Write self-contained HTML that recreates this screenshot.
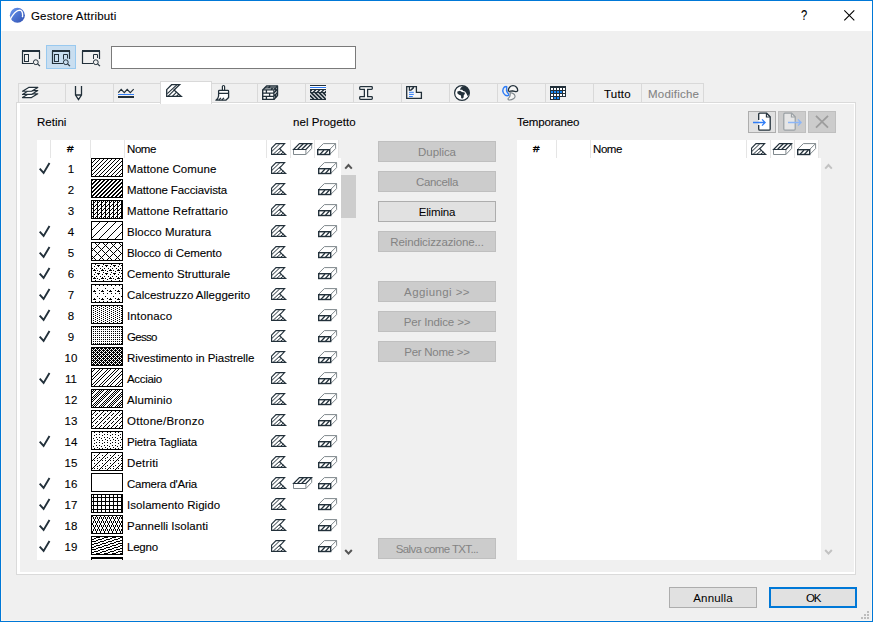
<!DOCTYPE html><html><head><meta charset="utf-8"><title>Gestore Attributi</title><style>
html,body{margin:0;padding:0;}
body{width:873px;height:622px;overflow:hidden;background:#f0f0f0;font-family:"Liberation Sans",sans-serif;font-size:11.5px;color:#000;position:relative;}
.a{position:absolute;}
.win{left:0;top:0;width:871px;height:620px;border:1px solid #0078d7;background:#f0f0f0;}
.title{left:1px;top:1px;width:871px;height:30px;background:#fff;}
.t{position:absolute;white-space:nowrap;line-height:14px;height:14px;-webkit-text-stroke:0.1px currentColor;}
.btn{position:absolute;box-sizing:border-box;border:1px solid #adadad;background:#e1e1e1;text-align:center;line-height:21px;height:21px;white-space:nowrap;}
.btn.dis{background:#cccccc;border-color:#bfbfbf;color:#838383;}
.list{position:absolute;background:#fff;overflow:hidden;}
.sw{position:absolute;left:54px;width:32px;height:19px;box-sizing:border-box;border:1px solid #000;background:#fff;overflow:hidden;}
.sw svg{position:absolute;left:0;top:0;}
.row{position:absolute;left:0;width:304px;height:21px;}
.sep{position:absolute;width:1px;background:#e5e5e5;}
svg{display:block;overflow:visible;}
</style></head><body>
<div class="a win"></div><div class="a title"></div>
<svg class="a" style="left:0;top:0" width="0" height="0"><defs><pattern id="p1" width="4" height="4" patternUnits="userSpaceOnUse"><rect width="4" height="4" fill="#fff"/><rect x="3" y="0" width="1" height="1" fill="#000"/><rect x="2" y="1" width="1" height="1" fill="#000"/><rect x="1" y="2" width="1" height="1" fill="#000"/><rect x="0" y="3" width="1" height="1" fill="#000"/></pattern><pattern id="p2" width="4" height="4" patternUnits="userSpaceOnUse"><rect width="4" height="4" fill="#fff"/><rect x="0" y="0" width="1" height="1" fill="#000"/><rect x="3" y="0" width="1" height="1" fill="#000"/><rect x="2" y="1" width="2" height="1" fill="#000"/><rect x="1" y="2" width="2" height="1" fill="#000"/><rect x="0" y="3" width="2" height="1" fill="#000"/></pattern><pattern id="p3" width="4" height="4" patternUnits="userSpaceOnUse"><rect width="4" height="4" fill="#fff"/><rect x="1" y="0" width="1" height="1" fill="#000"/><rect x="3" y="0" width="1" height="1" fill="#000"/><rect x="1" y="1" width="2" height="1" fill="#000"/><rect x="1" y="2" width="1" height="1" fill="#000"/><rect x="0" y="3" width="2" height="1" fill="#000"/></pattern><pattern id="p4" width="8" height="8" patternUnits="userSpaceOnUse"><rect width="8" height="8" fill="#fff"/><rect x="7" y="0" width="1" height="1" fill="#000"/><rect x="6" y="1" width="1" height="1" fill="#000"/><rect x="5" y="2" width="1" height="1" fill="#000"/><rect x="4" y="3" width="1" height="1" fill="#000"/><rect x="3" y="4" width="1" height="1" fill="#000"/><rect x="2" y="5" width="1" height="1" fill="#000"/><rect x="1" y="6" width="1" height="1" fill="#000"/><rect x="0" y="7" width="1" height="1" fill="#000"/></pattern><pattern id="p5" width="8" height="8" patternUnits="userSpaceOnUse"><rect width="8" height="8" fill="#fff"/><rect x="3" y="0" width="1" height="1" fill="#000"/><rect x="7" y="0" width="1" height="1" fill="#000"/><rect x="4" y="1" width="1" height="1" fill="#000"/><rect x="6" y="1" width="1" height="1" fill="#000"/><rect x="5" y="2" width="1" height="1" fill="#000"/><rect x="4" y="3" width="1" height="1" fill="#000"/><rect x="6" y="3" width="1" height="1" fill="#000"/><rect x="3" y="4" width="1" height="1" fill="#000"/><rect x="7" y="4" width="1" height="1" fill="#000"/><rect x="0" y="5" width="1" height="1" fill="#000"/><rect x="2" y="5" width="1" height="1" fill="#000"/><rect x="1" y="6" width="1" height="1" fill="#000"/><rect x="0" y="7" width="1" height="1" fill="#000"/><rect x="2" y="7" width="1" height="1" fill="#000"/></pattern><pattern id="p6" width="8" height="8" patternUnits="userSpaceOnUse"><rect width="8" height="8" fill="#fff"/><rect x="3" y="0" width="1" height="1" fill="#000"/><rect x="5" y="1" width="3" height="1" fill="#000"/><rect x="2" y="2" width="1" height="1" fill="#000"/><rect x="6" y="2" width="1" height="1" fill="#000"/><rect x="0" y="4" width="1" height="1" fill="#000"/><rect x="4" y="4" width="1" height="1" fill="#000"/><rect x="2" y="5" width="1" height="1" fill="#000"/><rect x="1" y="6" width="3" height="1" fill="#000"/><rect x="5" y="6" width="1" height="1" fill="#000"/><rect x="7" y="7" width="1" height="1" fill="#000"/></pattern><pattern id="p7" width="8" height="8" patternUnits="userSpaceOnUse"><rect width="8" height="8" fill="#fff"/><rect x="3" y="0" width="1" height="1" fill="#000"/><rect x="7" y="0" width="1" height="1" fill="#000"/><rect x="5" y="3" width="1" height="1" fill="#000"/><rect x="2" y="5" width="1" height="1" fill="#000"/><rect x="7" y="5" width="1" height="1" fill="#000"/><rect x="1" y="6" width="3" height="1" fill="#000"/></pattern><pattern id="p8" width="4" height="2" patternUnits="userSpaceOnUse"><rect width="4" height="2" fill="#fff"/><rect x="1" y="0" width="1" height="1" fill="#000"/><rect x="3" y="1" width="1" height="1" fill="#000"/></pattern><pattern id="p9" width="2" height="2" patternUnits="userSpaceOnUse"><rect width="2" height="2" fill="#fff"/><rect x="1" y="0" width="1" height="1" fill="#000"/></pattern><pattern id="p10" width="4" height="4" patternUnits="userSpaceOnUse"><rect width="4" height="4" fill="#fff"/><rect x="0" y="0" width="3" height="1" fill="#000"/><rect x="1" y="1" width="1" height="1" fill="#000"/><rect x="3" y="1" width="1" height="1" fill="#000"/><rect x="0" y="2" width="1" height="1" fill="#000"/><rect x="2" y="2" width="2" height="1" fill="#000"/><rect x="1" y="3" width="1" height="1" fill="#000"/><rect x="3" y="3" width="1" height="1" fill="#000"/></pattern><pattern id="p11" width="8" height="8" patternUnits="userSpaceOnUse"><rect width="8" height="8" fill="#fff"/><rect x="2" y="0" width="1" height="1" fill="#000"/><rect x="7" y="0" width="1" height="1" fill="#000"/><rect x="1" y="1" width="1" height="1" fill="#000"/><rect x="6" y="1" width="1" height="1" fill="#000"/><rect x="0" y="2" width="1" height="1" fill="#000"/><rect x="5" y="2" width="1" height="1" fill="#000"/><rect x="4" y="3" width="1" height="1" fill="#000"/><rect x="7" y="3" width="1" height="1" fill="#000"/><rect x="3" y="4" width="1" height="1" fill="#000"/><rect x="6" y="4" width="1" height="1" fill="#000"/><rect x="2" y="5" width="1" height="1" fill="#000"/><rect x="5" y="5" width="1" height="1" fill="#000"/><rect x="1" y="6" width="1" height="1" fill="#000"/><rect x="4" y="6" width="1" height="1" fill="#000"/><rect x="0" y="7" width="1" height="1" fill="#000"/><rect x="3" y="7" width="1" height="1" fill="#000"/></pattern><pattern id="p12" width="8" height="8" patternUnits="userSpaceOnUse"><rect width="8" height="8" fill="#fff"/><rect x="1" y="0" width="1" height="1" fill="#000"/><rect x="3" y="0" width="1" height="1" fill="#000"/><rect x="7" y="0" width="1" height="1" fill="#000"/><rect x="0" y="1" width="1" height="1" fill="#000"/><rect x="2" y="1" width="1" height="1" fill="#000"/><rect x="6" y="1" width="1" height="1" fill="#000"/><rect x="1" y="2" width="1" height="1" fill="#000"/><rect x="5" y="2" width="1" height="1" fill="#000"/><rect x="7" y="2" width="1" height="1" fill="#000"/><rect x="0" y="3" width="1" height="1" fill="#000"/><rect x="4" y="3" width="1" height="1" fill="#000"/><rect x="6" y="3" width="1" height="1" fill="#000"/><rect x="3" y="4" width="1" height="1" fill="#000"/><rect x="5" y="4" width="1" height="1" fill="#000"/><rect x="7" y="4" width="1" height="1" fill="#000"/><rect x="2" y="5" width="1" height="1" fill="#000"/><rect x="4" y="5" width="1" height="1" fill="#000"/><rect x="6" y="5" width="1" height="1" fill="#000"/><rect x="1" y="6" width="1" height="1" fill="#000"/><rect x="3" y="6" width="1" height="1" fill="#000"/><rect x="5" y="6" width="1" height="1" fill="#000"/><rect x="0" y="7" width="1" height="1" fill="#000"/><rect x="2" y="7" width="1" height="1" fill="#000"/><rect x="4" y="7" width="1" height="1" fill="#000"/></pattern><pattern id="p13" width="8" height="8" patternUnits="userSpaceOnUse"><rect width="8" height="8" fill="#fff"/><rect x="3" y="0" width="1" height="1" fill="#000"/><rect x="7" y="0" width="1" height="1" fill="#000"/><rect x="2" y="1" width="1" height="1" fill="#000"/><rect x="1" y="2" width="1" height="1" fill="#000"/><rect x="5" y="2" width="1" height="1" fill="#000"/><rect x="0" y="3" width="1" height="1" fill="#000"/><rect x="4" y="3" width="1" height="1" fill="#000"/><rect x="3" y="4" width="1" height="1" fill="#000"/><rect x="7" y="4" width="1" height="1" fill="#000"/><rect x="6" y="5" width="1" height="1" fill="#000"/><rect x="1" y="6" width="1" height="1" fill="#000"/><rect x="5" y="6" width="1" height="1" fill="#000"/><rect x="0" y="7" width="1" height="1" fill="#000"/><rect x="4" y="7" width="1" height="1" fill="#000"/></pattern><pattern id="p14" width="8" height="8" patternUnits="userSpaceOnUse"><rect width="8" height="8" fill="#fff"/><rect x="2" y="0" width="1" height="1" fill="#000"/><rect x="7" y="0" width="1" height="1" fill="#000"/><rect x="4" y="2" width="1" height="1" fill="#000"/><rect x="7" y="2" width="1" height="1" fill="#000"/><rect x="2" y="3" width="1" height="1" fill="#000"/><rect x="4" y="5" width="1" height="1" fill="#000"/><rect x="7" y="5" width="1" height="1" fill="#000"/><rect x="1" y="6" width="1" height="1" fill="#000"/><rect x="5" y="7" width="1" height="1" fill="#000"/></pattern><pattern id="p15" width="8" height="8" patternUnits="userSpaceOnUse"><rect width="8" height="8" fill="#fff"/><rect x="7" y="0" width="1" height="1" fill="#000"/><rect x="6" y="1" width="1" height="1" fill="#000"/><rect x="2" y="2" width="1" height="1" fill="#000"/><rect x="5" y="2" width="1" height="1" fill="#000"/><rect x="4" y="3" width="1" height="1" fill="#000"/><rect x="3" y="4" width="1" height="1" fill="#000"/><rect x="7" y="4" width="1" height="1" fill="#000"/><rect x="2" y="5" width="1" height="1" fill="#000"/><rect x="5" y="5" width="1" height="1" fill="#000"/><rect x="1" y="6" width="1" height="1" fill="#000"/><rect x="0" y="7" width="1" height="1" fill="#000"/><rect x="2" y="7" width="1" height="1" fill="#000"/><rect x="5" y="7" width="1" height="1" fill="#000"/></pattern><pattern id="p17" width="4" height="4" patternUnits="userSpaceOnUse"><rect width="4" height="4" fill="#fff"/><rect x="1" y="0" width="1" height="1" fill="#000"/><rect x="1" y="1" width="1" height="1" fill="#000"/><rect x="0" y="2" width="4" height="1" fill="#000"/><rect x="1" y="3" width="1" height="1" fill="#000"/></pattern><pattern id="p18" width="4" height="8" patternUnits="userSpaceOnUse"><rect width="4" height="8" fill="#fff"/><rect x="0" y="0" width="1" height="1" fill="#000"/><rect x="1" y="1" width="1" height="1" fill="#000"/><rect x="3" y="1" width="1" height="1" fill="#000"/><rect x="1" y="2" width="1" height="1" fill="#000"/><rect x="3" y="2" width="1" height="1" fill="#000"/><rect x="2" y="3" width="1" height="1" fill="#000"/><rect x="2" y="4" width="1" height="1" fill="#000"/><rect x="1" y="5" width="1" height="1" fill="#000"/><rect x="3" y="5" width="1" height="1" fill="#000"/><rect x="1" y="6" width="1" height="1" fill="#000"/><rect x="3" y="6" width="1" height="1" fill="#000"/><rect x="0" y="7" width="1" height="1" fill="#000"/></pattern><pattern id="p19" width="8" height="8" patternUnits="userSpaceOnUse"><rect width="8" height="8" fill="#fff"/><rect x="4" y="0" width="4" height="1" fill="#000"/><rect x="2" y="1" width="2" height="1" fill="#000"/><rect x="0" y="2" width="2" height="1" fill="#000"/><rect x="6" y="2" width="2" height="1" fill="#000"/><rect x="4" y="3" width="2" height="1" fill="#000"/><rect x="0" y="4" width="4" height="1" fill="#000"/><rect x="6" y="5" width="2" height="1" fill="#000"/><rect x="2" y="6" width="4" height="1" fill="#000"/><rect x="0" y="7" width="2" height="1" fill="#000"/></pattern></defs></svg>
<div class="a" style="left:1px;top:31px;width:869px;height:589px;border:solid #fcf6f0;border-width:0 1px 1px 1px;"></div>
<svg class="a" style="left:9px;top:7px" width="17" height="17" viewBox="0 0 17 17"><defs><linearGradient id="lg" x1="0" y1="0" x2="1" y2="1"><stop offset="0" stop-color="#6a98f0"/><stop offset="1" stop-color="#2f4fb0"/></linearGradient></defs><circle cx="8.4" cy="8.2" r="7.5" fill="url(#lg)"/><path d="M0.8 13C3.4 8 7.4 3.3 10.6 3.1C12.8 3.1 13.7 5.6 13.6 8.4" fill="none" stroke="#fff" stroke-width="1.4" stroke-linecap="round"/><circle cx="13.5" cy="9.6" r="0.8" fill="#fff"/></svg>
<div class="t" style="left:31px;top:9px;letter-spacing:0.172px;">Gestore Attributi</div>
<div class="t" style="left:801px;top:7px;font-size:14px;line-height:16px;height:16px;transform:scaleX(0.8);transform-origin:0 0;">?</div>
<svg class="a" style="left:844px;top:10px" width="11" height="11" viewBox="0 0 11 11"><path d="M0.3 0.3L10.3 10.3M10.3 0.3L0.3 10.3" stroke="#000" stroke-width="1.1" fill="none"/></svg>
<div class="a" style="left:46px;top:45px;width:28px;height:22px;border:1px solid #99c9ef;background:#c9def0;"></div>
<svg class="a" style="left:22px;top:50px" width="19" height="17" viewBox="0 0 19 17"><path d="M0 1H18" stroke="#22303a" stroke-width="2"/><path d="M0.5 1V13.5H11M17.5 1V9" fill="none" stroke="#22303a" stroke-width="1.2"/><rect x="2.5" y="4.5" width="4" height="7" fill="none" stroke="#22303a" stroke-width="1"/><circle cx="13.8" cy="12.2" r="2.4" fill="none" stroke="#22303a" stroke-width="1"/><path d="M15.6 14L18 16.2" stroke="#22303a" stroke-width="1.1"/></svg>
<svg class="a" style="left:52px;top:50px" width="19" height="17" viewBox="0 0 19 17"><path d="M0 1H18" stroke="#22303a" stroke-width="2"/><path d="M0.5 1V13.5H11M17.5 1V9" fill="none" stroke="#22303a" stroke-width="1.2"/><rect x="2.5" y="4.5" width="4" height="7" fill="none" stroke="#22303a" stroke-width="1"/><path d="M11.5 9.5V4.5H15.5V8.5" fill="none" stroke="#22303a" stroke-width="1"/><circle cx="13.8" cy="12.2" r="2.4" fill="none" stroke="#22303a" stroke-width="1"/><path d="M15.6 14L18 16.2" stroke="#22303a" stroke-width="1.1"/></svg>
<svg class="a" style="left:82px;top:50px" width="19" height="17" viewBox="0 0 19 17"><path d="M0 1H18" stroke="#22303a" stroke-width="2"/><path d="M0.5 1V13.5H11M17.5 1V9" fill="none" stroke="#22303a" stroke-width="1.2"/><path d="M11.5 9V4.5H15.5V8" fill="none" stroke="#22303a" stroke-width="1"/><circle cx="13.8" cy="12.2" r="2.4" fill="none" stroke="#22303a" stroke-width="1"/><path d="M15.6 14L18 16.2" stroke="#22303a" stroke-width="1.1"/></svg>
<div class="a" style="left:111px;top:46px;width:243px;height:21px;border:1px solid #7a7a7a;background:#fff;"></div>
<div class="a" style="left:16px;top:102px;width:838px;height:471px;border:1px solid #dadada;"></div>
<div class="a" style="left:17px;top:103px;width:834px;height:468px;border:solid #fff;border-width:1px 1px 2px 3px;"></div>
<div class="a" style="left:18px;top:83px;width:684px;height:19px;border:1px solid #d9d9d9;border-bottom:none;"></div>
<div class="a" style="left:65px;top:84px;width:1px;height:18px;background:#d9d9d9;"></div>
<div class="a" style="left:113px;top:84px;width:1px;height:18px;background:#d9d9d9;"></div>
<div class="a" style="left:257px;top:84px;width:1px;height:18px;background:#d9d9d9;"></div>
<div class="a" style="left:305px;top:84px;width:1px;height:18px;background:#d9d9d9;"></div>
<div class="a" style="left:353px;top:84px;width:1px;height:18px;background:#d9d9d9;"></div>
<div class="a" style="left:401px;top:84px;width:1px;height:18px;background:#d9d9d9;"></div>
<div class="a" style="left:449px;top:84px;width:1px;height:18px;background:#d9d9d9;"></div>
<div class="a" style="left:497px;top:84px;width:1px;height:18px;background:#d9d9d9;"></div>
<div class="a" style="left:545px;top:84px;width:1px;height:18px;background:#d9d9d9;"></div>
<div class="a" style="left:593px;top:84px;width:1px;height:18px;background:#d9d9d9;"></div>
<div class="a" style="left:641px;top:84px;width:1px;height:18px;background:#d9d9d9;"></div>
<div class="a" style="left:160px;top:81px;width:50px;height:22px;border:1px solid #d9d9d9;border-bottom:none;background:#fff;"></div>
<div class="t" style="left:604px;top:87px;letter-spacing:0.226px;">Tutto</div>
<div class="t" style="left:648px;top:87px;color:#838383;letter-spacing:0.210px;">Modifiche</div>
<svg class="a" style="left:22px;top:86px" width="17" height="13" viewBox="0 0 17 13"><path d="M6.7 7.800000000000001H15.8L9.5 11.600000000000001H0.5Z" fill="#fff" stroke="#22303a" stroke-width="1.15" stroke-linejoin="round"/><path d="M6.7 4.6H15.8L9.5 8.4H0.5Z" fill="#fff" stroke="#22303a" stroke-width="1.15" stroke-linejoin="round"/><path d="M6.7 1.4H15.8L9.5 5.2H0.5Z" fill="#fff" stroke="#22303a" stroke-width="1.15" stroke-linejoin="round"/></svg>
<svg class="a" style="left:74px;top:85px" width="10" height="16" viewBox="0 0 10 16"><path d="M1.5 1V10L4.5 14.6L7.5 10V1M1.5 10H7.5" fill="none" stroke="#22303a" stroke-width="1.3"/><path d="M3.6 12.9H5.4L4.5 14.6Z" fill="#22303a"/></svg>
<svg class="a" style="left:118px;top:88px" width="17" height="11" viewBox="0 0 17 11"><rect x="0" y="0" width="16" height="11" fill="none"/><path d="M0.3 4.6L3.2 1.4L6.3 4.6L9.2 1.4L12.3 4.6L15.7 1.2" fill="none" stroke="#22303a" stroke-width="1.2"/><rect x="0" y="6" width="16" height="1" fill="#2f7df6"/><rect x="0" y="8" width="16" height="2" fill="#22303a"/></svg>
<svg class="a" style="left:166px;top:84px" width="16" height="13" viewBox="0 0 16 13"><path d="M0.7 5.6L5.6 0.7H13.6L8 6L15.2 12.3H0.7Z" fill="#fff" stroke="#22303a" stroke-width="1.3"/><path d="M1.3 9.6L10.8 0.9M2 12.3L9.2 5.2M6.3 12.3L10.6 8.2M10.4 12.3L13 10" fill="none" stroke="#22303a" stroke-width="1.1"/></svg>
<svg class="a" style="left:215px;top:85px" width="15" height="16" viewBox="0 0 15 16"><path d="M7.4 5.2V1.6a1.1 1.1 0 0 1 2.2 0V5.2" fill="#fff" stroke="#22303a" stroke-width="1.2"/><path d="M3.6 8.2V11Q3.4 13.4 0.9 15.2H10.8L13.6 12.6V8.2Z" fill="#fff" stroke="#22303a" stroke-width="1.3" stroke-linejoin="round"/><rect x="3.6" y="5.4" width="10" height="2.9" rx="0.8" fill="#fff" stroke="#22303a" stroke-width="1.3"/><path d="M3.8 15L6 12.8M6.8 15L9 12.8" stroke="#22303a" stroke-width="1.2"/></svg>
<svg class="a" style="left:262px;top:85px" width="17" height="16" viewBox="0 0 17 16"><path d="M0.7 4.9L4.6 1H15.5V10.6L11.9 14.4H0.7Z" fill="#fff" stroke="#22303a" stroke-width="1.4" stroke-linejoin="round"/><path d="M0.7 4.9H11.9V14.4M11.9 4.9L15.5 1M0.7 8.1H11.9L15.5 4.3M0.7 11.3H11.9L15.5 7.5M2.7 2.9H13.7M4.4 4.9V8.1M7.6 8.1V11.3M4.4 11.3V14.4M8.2 1L6.4 2.9M10.8 2.9L9 4.9M13.7 2.9V6.3M13.7 9.4V12.4" fill="none" stroke="#22303a" stroke-width="1.3"/></svg>
<svg class="a" style="left:310px;top:85px" width="16" height="15" viewBox="0 0 16 15"><rect x="0" y="0" width="16" height="15" fill="#fff"/><clipPath id="cpc"><rect x="0" y="0" width="16" height="15"/></clipPath><g clip-path="url(#cpc)"><path d="M-1 7.5L2 4.5" stroke="#22303a" stroke-width="1.6"/><path d="M3 7.5L6 4.5" stroke="#22303a" stroke-width="1.6"/><path d="M7 7.5L10 4.5" stroke="#22303a" stroke-width="1.6"/><path d="M11 7.5L14 4.5" stroke="#22303a" stroke-width="1.6"/><path d="M15 7.5L18 4.5" stroke="#22303a" stroke-width="1.6"/><path d="M-7 7.5L0 14.5" stroke="#22303a" stroke-width="1.8"/><path d="M-3 7.5L4 14.5" stroke="#22303a" stroke-width="1.8"/><path d="M1 7.5L8 14.5" stroke="#22303a" stroke-width="1.8"/><path d="M5 7.5L12 14.5" stroke="#22303a" stroke-width="1.8"/><path d="M9 7.5L16 14.5" stroke="#22303a" stroke-width="1.8"/><path d="M13 7.5L20 14.5" stroke="#22303a" stroke-width="1.8"/></g><rect x="0" y="0" width="16" height="1" fill="#22303a"/><rect x="0" y="2" width="16" height="1" fill="#2f7df6"/><rect x="0" y="4" width="16" height="1" fill="#22303a"/><rect x="0" y="7" width="16" height="1" fill="#22303a"/><rect x="0" y="14" width="16" height="1" fill="#22303a"/></svg>
<svg class="a" style="left:359px;top:86px" width="14" height="14" viewBox="0 0 14 14"><path d="M1.5 0.7H12.5Q13.3 0.7 13.3 1.5V2.6Q13.3 3.4 12.5 3.4H8.6V10.6H12.5Q13.3 10.6 13.3 11.4V12.5Q13.3 13.3 12.5 13.3H1.5Q0.7 13.3 0.7 12.5V11.4Q0.7 10.6 1.5 10.6H5.4V3.4H1.5Q0.7 3.4 0.7 2.6V1.5Q0.7 0.7 1.5 0.7Z" fill="#fff" stroke="#22303a" stroke-width="1.3"/></svg>
<svg class="a" style="left:406px;top:86px" width="16" height="13" viewBox="0 0 16 13"><path d="M0.7 0.7H10.4V6.4H15.4V12.3H0.7Z" fill="#f6f6f6" stroke="#22303a" stroke-width="1.3"/><path d="M3.4 0.7V4.1H4.8L7.8 1" fill="none" stroke="#22303a" stroke-width="1.2"/><path d="M4.6 4.2L7.9 0.8V2.2L5.8 4.2Z" fill="#22303a"/><rect x="3" y="5.8" width="4.8" height="1" fill="#2f7df6"/><rect x="3" y="7.9" width="4.8" height="1" fill="#2f7df6"/><rect x="3" y="10" width="3.8" height="1" fill="#2f7df6"/></svg>
<svg class="a" style="left:454px;top:85px" width="17" height="17" viewBox="0 0 17 17"><circle cx="8" cy="8" r="7.4" fill="#fff" stroke="#22303a" stroke-width="1.2"/><path d="M6.6 3L8.4 1.2L11 1L14 3.4L15.3 7L14.8 10L13.6 11L12.4 8.6L11 6.4L9.2 6L8.2 4.8L6 4.8Z" fill="#22303a"/><path d="M3.4 6.6L6 5.8L8 7L10.6 7.5L10.9 9L9.8 10L9.6 12.4L8.2 13.8L7.2 13L7 10.5L5 9.8L3.3 8.2Z" fill="#22303a"/></svg>
<svg class="a" style="left:502px;top:85px" width="17" height="16" viewBox="0 0 17 16"><path d="M4.6 1.6C1.6 1.2-0.2 5 1.4 8C2.6 10.2 5 11 6.8 10.4C7.2 9 5.8 8.4 4.8 6.4C4 4.6 5.2 3.2 4.6 1.6Z" fill="none" stroke="#2f7df6" stroke-width="1.4"/><path d="M6.4 6C6 3 8.4 0.7 11 0.7C13.8 0.7 16 3 15.6 5.8C14.4 7.4 13.2 6.2 10.8 6C8.6 5.8 7.6 6.8 6.4 6Z" fill="#f6f6f6" stroke="#22303a" stroke-width="1.3"/><path d="M8 7.6C10 7.8 12.6 9 13 11C13.4 13 10.4 15.2 7 15C5.4 14.6 6 13.4 7 12.6C8.6 11.2 8.4 9.4 8 7.6Z" fill="#f6f6f6" stroke="#7f888d" stroke-width="1.1"/></svg>
<svg class="a" style="left:550px;top:86px" width="16" height="14" viewBox="0 0 16 14"><path d="M0 0H16V11H10V14H0Z" fill="#22303a"/><rect x="1" y="2" width="2" height="2" fill="#fff"/><rect x="4" y="2" width="2" height="2" fill="#fff"/><rect x="7" y="2" width="2" height="2" fill="#fff"/><rect x="10" y="2" width="2" height="2" fill="#fff"/><rect x="13" y="2" width="2" height="2" fill="#fff"/><rect x="1" y="5" width="2" height="2" fill="#1e8bf5"/><rect x="4" y="5" width="2" height="2" fill="#1e8bf5"/><rect x="7" y="5" width="2" height="2" fill="#1e8bf5"/><rect x="10" y="5" width="2" height="2" fill="#1e8bf5"/><rect x="13" y="5" width="2" height="2" fill="#fff"/><rect x="1" y="8" width="2" height="2" fill="#fff"/><rect x="4" y="8" width="2" height="2" fill="#fff"/><rect x="7" y="8" width="2" height="2" fill="#fff"/><rect x="10" y="8" width="2" height="2" fill="#fff"/><rect x="13" y="8" width="2" height="2" fill="#fff"/><rect x="1" y="11" width="2" height="2" fill="#fff"/><rect x="4" y="11" width="2" height="2" fill="#1e8bf5"/><rect x="7" y="11" width="2" height="2" fill="#1e8bf5"/></svg>
<div class="t" style="left:37px;top:115px;letter-spacing:-0.001px;">Retini</div>
<div class="t" style="left:293px;top:115px;letter-spacing:0.060px;">nel Progetto</div>
<div class="t" style="left:517px;top:115px;letter-spacing:-0.162px;">Temporaneo</div>
<div class="list" style="left:37px;top:140px;width:302px;height:18px;"></div>
<div class="sep" style="left:50px;top:140px;height:18px;"></div>
<div class="sep" style="left:90px;top:140px;height:18px;"></div>
<div class="sep" style="left:124px;top:140px;height:18px;"></div>
<div class="sep" style="left:266px;top:140px;height:18px;"></div>
<div class="sep" style="left:290px;top:140px;height:18px;"></div>
<div class="sep" style="left:314px;top:140px;height:18px;"></div>
<div class="sep" style="left:338px;top:140px;height:18px;"></div>
<div class="t" style="left:67px;top:143px;font-size:9px;line-height:12px;height:12px;-webkit-text-stroke:0.3px #000;transform:scaleX(1.3);transform-origin:0 0;">#</div>
<div class="t" style="left:127px;top:142px;letter-spacing:-0.425px;">Nome</div>
<svg class="a" style="left:271px;top:143px" width="16" height="12" viewBox="0 0 16 12"><path d="M0.6 5.1L5 0.6H13.6L8.7 5.9L14.6 11.3H0.6Z" fill="#fff" stroke="#22303a" stroke-width="1.15"/><path d="M0.9 8.4L8.8 0.8M2.2 11.2L9.6 4.4M6 11.2L10.4 7.2M9.8 11.2L12.4 8.9" fill="none" stroke="#22303a" stroke-width="1"/></svg>
<svg class="a" style="left:293px;top:143px" width="20" height="12" viewBox="0 0 20 12"><path d="M0.5 6.5V11.5H12.9V6.5M12.9 11.5L18.7 5.4V0.8" fill="#fff" stroke="#7f888d" stroke-width="1"/><path d="M0.6 6.5L6.4 0.6H18.6L12.9 6.5Z" fill="#fff" stroke="#22303a" stroke-width="1.2"/><path d="M4.7 6.3L10.3 0.8M8.8 6.3L14.4 0.8" fill="none" stroke="#22303a" stroke-width="1.35"/></svg>
<svg class="a" style="left:317px;top:143px" width="20" height="12" viewBox="0 0 20 12"><path d="M0.5 6.4L6.4 0.6H18.6V5.6L12.7 11.5M12.7 6.4L18.6 0.6" fill="none" stroke="#7f888d" stroke-width="1"/><rect x="0.7" y="6.7" width="12" height="4.8" fill="#fff" stroke="#22303a" stroke-width="1.4"/><path d="M3 11.4L7 7M7.4 11.4L11.4 7" fill="none" stroke="#22303a" stroke-width="1.3"/></svg>
<div class="list" style="left:37px;top:158px;width:304px;height:402px;">
<div class="row" style="top:0px">
<svg class="a" style="left:2px;top:4px" width="12" height="12" viewBox="0 0 12 12"><path d="M0.7 6.6L4.6 10.9L10.5 1.1" fill="none" stroke="#22303a" stroke-width="1.9"/></svg>
<div class="t" style="left:19px;width:30px;text-align:center;top:4px;">1</div>
<div class="sw" style="top:0"><svg width="30" height="17" shape-rendering="crispEdges"><rect width="30" height="17" fill="url(#p1)"/></svg></div>
<div class="t" style="left:90px;top:4px;letter-spacing:0.088px;">Mattone Comune</div>
<svg class="a" style="left:234px;top:4px" width="16" height="12" viewBox="0 0 16 12"><path d="M0.6 5.1L5 0.6H13.6L8.7 5.9L14.6 11.3H0.6Z" fill="#fff" stroke="#22303a" stroke-width="1.15"/><path d="M0.9 8.4L8.8 0.8M2.2 11.2L9.6 4.4M6 11.2L10.4 7.2M9.8 11.2L12.4 8.9" fill="none" stroke="#22303a" stroke-width="1"/></svg>
<svg class="a" style="left:281px;top:4px" width="20" height="12" viewBox="0 0 20 12"><path d="M0.5 6.4L6.4 0.6H18.6V5.6L12.7 11.5M12.7 6.4L18.6 0.6" fill="none" stroke="#7f888d" stroke-width="1"/><rect x="0.7" y="6.7" width="12" height="4.8" fill="#fff" stroke="#22303a" stroke-width="1.4"/><path d="M3 11.4L7 7M7.4 11.4L11.4 7" fill="none" stroke="#22303a" stroke-width="1.3"/></svg>
</div>
<div class="row" style="top:21px">
<div class="t" style="left:19px;width:30px;text-align:center;top:4px;">2</div>
<div class="sw" style="top:0"><svg width="30" height="17" shape-rendering="crispEdges"><rect width="30" height="17" fill="url(#p2)"/></svg></div>
<div class="t" style="left:90px;top:4px;letter-spacing:-0.112px;">Mattone Facciavista</div>
<svg class="a" style="left:234px;top:4px" width="16" height="12" viewBox="0 0 16 12"><path d="M0.6 5.1L5 0.6H13.6L8.7 5.9L14.6 11.3H0.6Z" fill="#fff" stroke="#22303a" stroke-width="1.15"/><path d="M0.9 8.4L8.8 0.8M2.2 11.2L9.6 4.4M6 11.2L10.4 7.2M9.8 11.2L12.4 8.9" fill="none" stroke="#22303a" stroke-width="1"/></svg>
<svg class="a" style="left:281px;top:4px" width="20" height="12" viewBox="0 0 20 12"><path d="M0.5 6.4L6.4 0.6H18.6V5.6L12.7 11.5M12.7 6.4L18.6 0.6" fill="none" stroke="#7f888d" stroke-width="1"/><rect x="0.7" y="6.7" width="12" height="4.8" fill="#fff" stroke="#22303a" stroke-width="1.4"/><path d="M3 11.4L7 7M7.4 11.4L11.4 7" fill="none" stroke="#22303a" stroke-width="1.3"/></svg>
</div>
<div class="row" style="top:42px">
<div class="t" style="left:19px;width:30px;text-align:center;top:4px;">3</div>
<div class="sw" style="top:0"><svg width="30" height="17" shape-rendering="crispEdges"><rect width="30" height="17" fill="url(#p3)"/></svg></div>
<div class="t" style="left:90px;top:4px;letter-spacing:0.133px;">Mattone Refrattario</div>
<svg class="a" style="left:234px;top:4px" width="16" height="12" viewBox="0 0 16 12"><path d="M0.6 5.1L5 0.6H13.6L8.7 5.9L14.6 11.3H0.6Z" fill="#fff" stroke="#22303a" stroke-width="1.15"/><path d="M0.9 8.4L8.8 0.8M2.2 11.2L9.6 4.4M6 11.2L10.4 7.2M9.8 11.2L12.4 8.9" fill="none" stroke="#22303a" stroke-width="1"/></svg>
<svg class="a" style="left:281px;top:4px" width="20" height="12" viewBox="0 0 20 12"><path d="M0.5 6.4L6.4 0.6H18.6V5.6L12.7 11.5M12.7 6.4L18.6 0.6" fill="none" stroke="#7f888d" stroke-width="1"/><rect x="0.7" y="6.7" width="12" height="4.8" fill="#fff" stroke="#22303a" stroke-width="1.4"/><path d="M3 11.4L7 7M7.4 11.4L11.4 7" fill="none" stroke="#22303a" stroke-width="1.3"/></svg>
</div>
<div class="row" style="top:63px">
<svg class="a" style="left:2px;top:4px" width="12" height="12" viewBox="0 0 12 12"><path d="M0.7 6.6L4.6 10.9L10.5 1.1" fill="none" stroke="#22303a" stroke-width="1.9"/></svg>
<div class="t" style="left:19px;width:30px;text-align:center;top:4px;">4</div>
<div class="sw" style="top:0"><svg width="30" height="17" shape-rendering="crispEdges"><rect width="30" height="17" fill="url(#p4)"/></svg></div>
<div class="t" style="left:90px;top:4px;letter-spacing:0.032px;">Blocco Muratura</div>
<svg class="a" style="left:234px;top:4px" width="16" height="12" viewBox="0 0 16 12"><path d="M0.6 5.1L5 0.6H13.6L8.7 5.9L14.6 11.3H0.6Z" fill="#fff" stroke="#22303a" stroke-width="1.15"/><path d="M0.9 8.4L8.8 0.8M2.2 11.2L9.6 4.4M6 11.2L10.4 7.2M9.8 11.2L12.4 8.9" fill="none" stroke="#22303a" stroke-width="1"/></svg>
<svg class="a" style="left:281px;top:4px" width="20" height="12" viewBox="0 0 20 12"><path d="M0.5 6.4L6.4 0.6H18.6V5.6L12.7 11.5M12.7 6.4L18.6 0.6" fill="none" stroke="#7f888d" stroke-width="1"/><rect x="0.7" y="6.7" width="12" height="4.8" fill="#fff" stroke="#22303a" stroke-width="1.4"/><path d="M3 11.4L7 7M7.4 11.4L11.4 7" fill="none" stroke="#22303a" stroke-width="1.3"/></svg>
</div>
<div class="row" style="top:84px">
<svg class="a" style="left:2px;top:4px" width="12" height="12" viewBox="0 0 12 12"><path d="M0.7 6.6L4.6 10.9L10.5 1.1" fill="none" stroke="#22303a" stroke-width="1.9"/></svg>
<div class="t" style="left:19px;width:30px;text-align:center;top:4px;">5</div>
<div class="sw" style="top:0"><svg width="30" height="17" shape-rendering="crispEdges"><rect width="30" height="17" fill="url(#p5)"/></svg></div>
<div class="t" style="left:90px;top:4px;letter-spacing:-0.105px;">Blocco di Cemento</div>
<svg class="a" style="left:234px;top:4px" width="16" height="12" viewBox="0 0 16 12"><path d="M0.6 5.1L5 0.6H13.6L8.7 5.9L14.6 11.3H0.6Z" fill="#fff" stroke="#22303a" stroke-width="1.15"/><path d="M0.9 8.4L8.8 0.8M2.2 11.2L9.6 4.4M6 11.2L10.4 7.2M9.8 11.2L12.4 8.9" fill="none" stroke="#22303a" stroke-width="1"/></svg>
<svg class="a" style="left:281px;top:4px" width="20" height="12" viewBox="0 0 20 12"><path d="M0.5 6.4L6.4 0.6H18.6V5.6L12.7 11.5M12.7 6.4L18.6 0.6" fill="none" stroke="#7f888d" stroke-width="1"/><rect x="0.7" y="6.7" width="12" height="4.8" fill="#fff" stroke="#22303a" stroke-width="1.4"/><path d="M3 11.4L7 7M7.4 11.4L11.4 7" fill="none" stroke="#22303a" stroke-width="1.3"/></svg>
</div>
<div class="row" style="top:105px">
<svg class="a" style="left:2px;top:4px" width="12" height="12" viewBox="0 0 12 12"><path d="M0.7 6.6L4.6 10.9L10.5 1.1" fill="none" stroke="#22303a" stroke-width="1.9"/></svg>
<div class="t" style="left:19px;width:30px;text-align:center;top:4px;">6</div>
<div class="sw" style="top:0"><svg width="30" height="17" shape-rendering="crispEdges"><rect width="30" height="17" fill="url(#p6)"/></svg></div>
<div class="t" style="left:90px;top:4px;letter-spacing:0.015px;">Cemento Strutturale</div>
<svg class="a" style="left:234px;top:4px" width="16" height="12" viewBox="0 0 16 12"><path d="M0.6 5.1L5 0.6H13.6L8.7 5.9L14.6 11.3H0.6Z" fill="#fff" stroke="#22303a" stroke-width="1.15"/><path d="M0.9 8.4L8.8 0.8M2.2 11.2L9.6 4.4M6 11.2L10.4 7.2M9.8 11.2L12.4 8.9" fill="none" stroke="#22303a" stroke-width="1"/></svg>
<svg class="a" style="left:281px;top:4px" width="20" height="12" viewBox="0 0 20 12"><path d="M0.5 6.4L6.4 0.6H18.6V5.6L12.7 11.5M12.7 6.4L18.6 0.6" fill="none" stroke="#7f888d" stroke-width="1"/><rect x="0.7" y="6.7" width="12" height="4.8" fill="#fff" stroke="#22303a" stroke-width="1.4"/><path d="M3 11.4L7 7M7.4 11.4L11.4 7" fill="none" stroke="#22303a" stroke-width="1.3"/></svg>
</div>
<div class="row" style="top:126px">
<svg class="a" style="left:2px;top:4px" width="12" height="12" viewBox="0 0 12 12"><path d="M0.7 6.6L4.6 10.9L10.5 1.1" fill="none" stroke="#22303a" stroke-width="1.9"/></svg>
<div class="t" style="left:19px;width:30px;text-align:center;top:4px;">7</div>
<div class="sw" style="top:0"><svg width="30" height="17" shape-rendering="crispEdges"><rect width="30" height="17" fill="url(#p7)"/></svg></div>
<div class="t" style="left:90px;top:4px;letter-spacing:-0.012px;">Calcestruzzo Alleggerito</div>
<svg class="a" style="left:234px;top:4px" width="16" height="12" viewBox="0 0 16 12"><path d="M0.6 5.1L5 0.6H13.6L8.7 5.9L14.6 11.3H0.6Z" fill="#fff" stroke="#22303a" stroke-width="1.15"/><path d="M0.9 8.4L8.8 0.8M2.2 11.2L9.6 4.4M6 11.2L10.4 7.2M9.8 11.2L12.4 8.9" fill="none" stroke="#22303a" stroke-width="1"/></svg>
<svg class="a" style="left:281px;top:4px" width="20" height="12" viewBox="0 0 20 12"><path d="M0.5 6.4L6.4 0.6H18.6V5.6L12.7 11.5M12.7 6.4L18.6 0.6" fill="none" stroke="#7f888d" stroke-width="1"/><rect x="0.7" y="6.7" width="12" height="4.8" fill="#fff" stroke="#22303a" stroke-width="1.4"/><path d="M3 11.4L7 7M7.4 11.4L11.4 7" fill="none" stroke="#22303a" stroke-width="1.3"/></svg>
</div>
<div class="row" style="top:147px">
<svg class="a" style="left:2px;top:4px" width="12" height="12" viewBox="0 0 12 12"><path d="M0.7 6.6L4.6 10.9L10.5 1.1" fill="none" stroke="#22303a" stroke-width="1.9"/></svg>
<div class="t" style="left:19px;width:30px;text-align:center;top:4px;">8</div>
<div class="sw" style="top:0"><svg width="30" height="17" shape-rendering="crispEdges"><rect width="30" height="17" fill="url(#p8)"/></svg></div>
<div class="t" style="left:90px;top:4px;letter-spacing:0.130px;">Intonaco</div>
<svg class="a" style="left:234px;top:4px" width="16" height="12" viewBox="0 0 16 12"><path d="M0.6 5.1L5 0.6H13.6L8.7 5.9L14.6 11.3H0.6Z" fill="#fff" stroke="#22303a" stroke-width="1.15"/><path d="M0.9 8.4L8.8 0.8M2.2 11.2L9.6 4.4M6 11.2L10.4 7.2M9.8 11.2L12.4 8.9" fill="none" stroke="#22303a" stroke-width="1"/></svg>
<svg class="a" style="left:281px;top:4px" width="20" height="12" viewBox="0 0 20 12"><path d="M0.5 6.4L6.4 0.6H18.6V5.6L12.7 11.5M12.7 6.4L18.6 0.6" fill="none" stroke="#7f888d" stroke-width="1"/><rect x="0.7" y="6.7" width="12" height="4.8" fill="#fff" stroke="#22303a" stroke-width="1.4"/><path d="M3 11.4L7 7M7.4 11.4L11.4 7" fill="none" stroke="#22303a" stroke-width="1.3"/></svg>
</div>
<div class="row" style="top:168px">
<svg class="a" style="left:2px;top:4px" width="12" height="12" viewBox="0 0 12 12"><path d="M0.7 6.6L4.6 10.9L10.5 1.1" fill="none" stroke="#22303a" stroke-width="1.9"/></svg>
<div class="t" style="left:19px;width:30px;text-align:center;top:4px;">9</div>
<div class="sw" style="top:0"><svg width="30" height="17" shape-rendering="crispEdges"><rect width="30" height="17" fill="url(#p9)"/></svg></div>
<div class="t" style="left:90px;top:4px;letter-spacing:-0.700px;">Gesso</div>
<svg class="a" style="left:234px;top:4px" width="16" height="12" viewBox="0 0 16 12"><path d="M0.6 5.1L5 0.6H13.6L8.7 5.9L14.6 11.3H0.6Z" fill="#fff" stroke="#22303a" stroke-width="1.15"/><path d="M0.9 8.4L8.8 0.8M2.2 11.2L9.6 4.4M6 11.2L10.4 7.2M9.8 11.2L12.4 8.9" fill="none" stroke="#22303a" stroke-width="1"/></svg>
<svg class="a" style="left:281px;top:4px" width="20" height="12" viewBox="0 0 20 12"><path d="M0.5 6.4L6.4 0.6H18.6V5.6L12.7 11.5M12.7 6.4L18.6 0.6" fill="none" stroke="#7f888d" stroke-width="1"/><rect x="0.7" y="6.7" width="12" height="4.8" fill="#fff" stroke="#22303a" stroke-width="1.4"/><path d="M3 11.4L7 7M7.4 11.4L11.4 7" fill="none" stroke="#22303a" stroke-width="1.3"/></svg>
</div>
<div class="row" style="top:189px">
<div class="t" style="left:19px;width:30px;text-align:center;top:4px;">10</div>
<div class="sw" style="top:0"><svg width="30" height="17" shape-rendering="crispEdges"><rect width="30" height="17" fill="url(#p10)"/></svg></div>
<div class="t" style="left:90px;top:4px;letter-spacing:-0.067px;">Rivestimento in Piastrelle</div>
<svg class="a" style="left:234px;top:4px" width="16" height="12" viewBox="0 0 16 12"><path d="M0.6 5.1L5 0.6H13.6L8.7 5.9L14.6 11.3H0.6Z" fill="#fff" stroke="#22303a" stroke-width="1.15"/><path d="M0.9 8.4L8.8 0.8M2.2 11.2L9.6 4.4M6 11.2L10.4 7.2M9.8 11.2L12.4 8.9" fill="none" stroke="#22303a" stroke-width="1"/></svg>
<svg class="a" style="left:281px;top:4px" width="20" height="12" viewBox="0 0 20 12"><path d="M0.5 6.4L6.4 0.6H18.6V5.6L12.7 11.5M12.7 6.4L18.6 0.6" fill="none" stroke="#7f888d" stroke-width="1"/><rect x="0.7" y="6.7" width="12" height="4.8" fill="#fff" stroke="#22303a" stroke-width="1.4"/><path d="M3 11.4L7 7M7.4 11.4L11.4 7" fill="none" stroke="#22303a" stroke-width="1.3"/></svg>
</div>
<div class="row" style="top:210px">
<svg class="a" style="left:2px;top:4px" width="12" height="12" viewBox="0 0 12 12"><path d="M0.7 6.6L4.6 10.9L10.5 1.1" fill="none" stroke="#22303a" stroke-width="1.9"/></svg>
<div class="t" style="left:19px;width:30px;text-align:center;top:4px;">11</div>
<div class="sw" style="top:0"><svg width="30" height="17" shape-rendering="crispEdges"><rect width="30" height="17" fill="url(#p11)"/></svg></div>
<div class="t" style="left:90px;top:4px;letter-spacing:-0.304px;">Acciaio</div>
<svg class="a" style="left:234px;top:4px" width="16" height="12" viewBox="0 0 16 12"><path d="M0.6 5.1L5 0.6H13.6L8.7 5.9L14.6 11.3H0.6Z" fill="#fff" stroke="#22303a" stroke-width="1.15"/><path d="M0.9 8.4L8.8 0.8M2.2 11.2L9.6 4.4M6 11.2L10.4 7.2M9.8 11.2L12.4 8.9" fill="none" stroke="#22303a" stroke-width="1"/></svg>
<svg class="a" style="left:281px;top:4px" width="20" height="12" viewBox="0 0 20 12"><path d="M0.5 6.4L6.4 0.6H18.6V5.6L12.7 11.5M12.7 6.4L18.6 0.6" fill="none" stroke="#7f888d" stroke-width="1"/><rect x="0.7" y="6.7" width="12" height="4.8" fill="#fff" stroke="#22303a" stroke-width="1.4"/><path d="M3 11.4L7 7M7.4 11.4L11.4 7" fill="none" stroke="#22303a" stroke-width="1.3"/></svg>
</div>
<div class="row" style="top:231px">
<div class="t" style="left:19px;width:30px;text-align:center;top:4px;">12</div>
<div class="sw" style="top:0"><svg width="30" height="17" shape-rendering="crispEdges"><rect width="30" height="17" fill="url(#p12)"/></svg></div>
<div class="t" style="left:90px;top:4px;letter-spacing:0.132px;">Aluminio</div>
<svg class="a" style="left:234px;top:4px" width="16" height="12" viewBox="0 0 16 12"><path d="M0.6 5.1L5 0.6H13.6L8.7 5.9L14.6 11.3H0.6Z" fill="#fff" stroke="#22303a" stroke-width="1.15"/><path d="M0.9 8.4L8.8 0.8M2.2 11.2L9.6 4.4M6 11.2L10.4 7.2M9.8 11.2L12.4 8.9" fill="none" stroke="#22303a" stroke-width="1"/></svg>
<svg class="a" style="left:281px;top:4px" width="20" height="12" viewBox="0 0 20 12"><path d="M0.5 6.4L6.4 0.6H18.6V5.6L12.7 11.5M12.7 6.4L18.6 0.6" fill="none" stroke="#7f888d" stroke-width="1"/><rect x="0.7" y="6.7" width="12" height="4.8" fill="#fff" stroke="#22303a" stroke-width="1.4"/><path d="M3 11.4L7 7M7.4 11.4L11.4 7" fill="none" stroke="#22303a" stroke-width="1.3"/></svg>
</div>
<div class="row" style="top:252px">
<div class="t" style="left:19px;width:30px;text-align:center;top:4px;">13</div>
<div class="sw" style="top:0"><svg width="30" height="17" shape-rendering="crispEdges"><rect width="30" height="17" fill="url(#p13)"/></svg></div>
<div class="t" style="left:90px;top:4px;letter-spacing:0.244px;">Ottone/Bronzo</div>
<svg class="a" style="left:234px;top:4px" width="16" height="12" viewBox="0 0 16 12"><path d="M0.6 5.1L5 0.6H13.6L8.7 5.9L14.6 11.3H0.6Z" fill="#fff" stroke="#22303a" stroke-width="1.15"/><path d="M0.9 8.4L8.8 0.8M2.2 11.2L9.6 4.4M6 11.2L10.4 7.2M9.8 11.2L12.4 8.9" fill="none" stroke="#22303a" stroke-width="1"/></svg>
<svg class="a" style="left:281px;top:4px" width="20" height="12" viewBox="0 0 20 12"><path d="M0.5 6.4L6.4 0.6H18.6V5.6L12.7 11.5M12.7 6.4L18.6 0.6" fill="none" stroke="#7f888d" stroke-width="1"/><rect x="0.7" y="6.7" width="12" height="4.8" fill="#fff" stroke="#22303a" stroke-width="1.4"/><path d="M3 11.4L7 7M7.4 11.4L11.4 7" fill="none" stroke="#22303a" stroke-width="1.3"/></svg>
</div>
<div class="row" style="top:273px">
<svg class="a" style="left:2px;top:4px" width="12" height="12" viewBox="0 0 12 12"><path d="M0.7 6.6L4.6 10.9L10.5 1.1" fill="none" stroke="#22303a" stroke-width="1.9"/></svg>
<div class="t" style="left:19px;width:30px;text-align:center;top:4px;">14</div>
<div class="sw" style="top:0"><svg width="30" height="17" shape-rendering="crispEdges"><rect width="30" height="17" fill="url(#p14)"/></svg></div>
<div class="t" style="left:90px;top:4px;letter-spacing:-0.177px;">Pietra Tagliata</div>
<svg class="a" style="left:234px;top:4px" width="16" height="12" viewBox="0 0 16 12"><path d="M0.6 5.1L5 0.6H13.6L8.7 5.9L14.6 11.3H0.6Z" fill="#fff" stroke="#22303a" stroke-width="1.15"/><path d="M0.9 8.4L8.8 0.8M2.2 11.2L9.6 4.4M6 11.2L10.4 7.2M9.8 11.2L12.4 8.9" fill="none" stroke="#22303a" stroke-width="1"/></svg>
<svg class="a" style="left:281px;top:4px" width="20" height="12" viewBox="0 0 20 12"><path d="M0.5 6.4L6.4 0.6H18.6V5.6L12.7 11.5M12.7 6.4L18.6 0.6" fill="none" stroke="#7f888d" stroke-width="1"/><rect x="0.7" y="6.7" width="12" height="4.8" fill="#fff" stroke="#22303a" stroke-width="1.4"/><path d="M3 11.4L7 7M7.4 11.4L11.4 7" fill="none" stroke="#22303a" stroke-width="1.3"/></svg>
</div>
<div class="row" style="top:294px">
<div class="t" style="left:19px;width:30px;text-align:center;top:4px;">15</div>
<div class="sw" style="top:0"><svg width="30" height="17" shape-rendering="crispEdges"><rect width="30" height="17" fill="url(#p15)"/></svg></div>
<div class="t" style="left:90px;top:4px;letter-spacing:0.180px;">Detriti</div>
<svg class="a" style="left:234px;top:4px" width="16" height="12" viewBox="0 0 16 12"><path d="M0.6 5.1L5 0.6H13.6L8.7 5.9L14.6 11.3H0.6Z" fill="#fff" stroke="#22303a" stroke-width="1.15"/><path d="M0.9 8.4L8.8 0.8M2.2 11.2L9.6 4.4M6 11.2L10.4 7.2M9.8 11.2L12.4 8.9" fill="none" stroke="#22303a" stroke-width="1"/></svg>
<svg class="a" style="left:281px;top:4px" width="20" height="12" viewBox="0 0 20 12"><path d="M0.5 6.4L6.4 0.6H18.6V5.6L12.7 11.5M12.7 6.4L18.6 0.6" fill="none" stroke="#7f888d" stroke-width="1"/><rect x="0.7" y="6.7" width="12" height="4.8" fill="#fff" stroke="#22303a" stroke-width="1.4"/><path d="M3 11.4L7 7M7.4 11.4L11.4 7" fill="none" stroke="#22303a" stroke-width="1.3"/></svg>
</div>
<div class="row" style="top:315px">
<svg class="a" style="left:2px;top:4px" width="12" height="12" viewBox="0 0 12 12"><path d="M0.7 6.6L4.6 10.9L10.5 1.1" fill="none" stroke="#22303a" stroke-width="1.9"/></svg>
<div class="t" style="left:19px;width:30px;text-align:center;top:4px;">16</div>
<div class="sw" style="top:0"></div>
<div class="t" style="left:90px;top:4px;letter-spacing:-0.243px;">Camera d'Aria</div>
<svg class="a" style="left:234px;top:4px" width="16" height="12" viewBox="0 0 16 12"><path d="M0.6 5.1L5 0.6H13.6L8.7 5.9L14.6 11.3H0.6Z" fill="#fff" stroke="#22303a" stroke-width="1.15"/><path d="M0.9 8.4L8.8 0.8M2.2 11.2L9.6 4.4M6 11.2L10.4 7.2M9.8 11.2L12.4 8.9" fill="none" stroke="#22303a" stroke-width="1"/></svg>
<svg class="a" style="left:256px;top:4px" width="20" height="12" viewBox="0 0 20 12"><path d="M0.5 6.5V11.5H12.9V6.5M12.9 11.5L18.7 5.4V0.8" fill="#fff" stroke="#7f888d" stroke-width="1"/><path d="M0.6 6.5L6.4 0.6H18.6L12.9 6.5Z" fill="#fff" stroke="#22303a" stroke-width="1.2"/><path d="M4.7 6.3L10.3 0.8M8.8 6.3L14.4 0.8" fill="none" stroke="#22303a" stroke-width="1.35"/></svg>
<svg class="a" style="left:281px;top:4px" width="20" height="12" viewBox="0 0 20 12"><path d="M0.5 6.4L6.4 0.6H18.6V5.6L12.7 11.5M12.7 6.4L18.6 0.6" fill="none" stroke="#7f888d" stroke-width="1"/><rect x="0.7" y="6.7" width="12" height="4.8" fill="#fff" stroke="#22303a" stroke-width="1.4"/><path d="M3 11.4L7 7M7.4 11.4L11.4 7" fill="none" stroke="#22303a" stroke-width="1.3"/></svg>
</div>
<div class="row" style="top:336px">
<svg class="a" style="left:2px;top:4px" width="12" height="12" viewBox="0 0 12 12"><path d="M0.7 6.6L4.6 10.9L10.5 1.1" fill="none" stroke="#22303a" stroke-width="1.9"/></svg>
<div class="t" style="left:19px;width:30px;text-align:center;top:4px;">17</div>
<div class="sw" style="top:0"><svg width="30" height="17" shape-rendering="crispEdges"><rect width="30" height="17" fill="url(#p17)"/></svg></div>
<div class="t" style="left:90px;top:4px;letter-spacing:0.063px;">Isolamento Rigido</div>
<svg class="a" style="left:234px;top:4px" width="16" height="12" viewBox="0 0 16 12"><path d="M0.6 5.1L5 0.6H13.6L8.7 5.9L14.6 11.3H0.6Z" fill="#fff" stroke="#22303a" stroke-width="1.15"/><path d="M0.9 8.4L8.8 0.8M2.2 11.2L9.6 4.4M6 11.2L10.4 7.2M9.8 11.2L12.4 8.9" fill="none" stroke="#22303a" stroke-width="1"/></svg>
<svg class="a" style="left:281px;top:4px" width="20" height="12" viewBox="0 0 20 12"><path d="M0.5 6.4L6.4 0.6H18.6V5.6L12.7 11.5M12.7 6.4L18.6 0.6" fill="none" stroke="#7f888d" stroke-width="1"/><rect x="0.7" y="6.7" width="12" height="4.8" fill="#fff" stroke="#22303a" stroke-width="1.4"/><path d="M3 11.4L7 7M7.4 11.4L11.4 7" fill="none" stroke="#22303a" stroke-width="1.3"/></svg>
</div>
<div class="row" style="top:357px">
<svg class="a" style="left:2px;top:4px" width="12" height="12" viewBox="0 0 12 12"><path d="M0.7 6.6L4.6 10.9L10.5 1.1" fill="none" stroke="#22303a" stroke-width="1.9"/></svg>
<div class="t" style="left:19px;width:30px;text-align:center;top:4px;">18</div>
<div class="sw" style="top:0"><svg width="30" height="17" shape-rendering="crispEdges"><rect width="30" height="17" fill="url(#p18)"/></svg></div>
<div class="t" style="left:90px;top:4px;letter-spacing:0.027px;">Pannelli Isolanti</div>
<svg class="a" style="left:234px;top:4px" width="16" height="12" viewBox="0 0 16 12"><path d="M0.6 5.1L5 0.6H13.6L8.7 5.9L14.6 11.3H0.6Z" fill="#fff" stroke="#22303a" stroke-width="1.15"/><path d="M0.9 8.4L8.8 0.8M2.2 11.2L9.6 4.4M6 11.2L10.4 7.2M9.8 11.2L12.4 8.9" fill="none" stroke="#22303a" stroke-width="1"/></svg>
<svg class="a" style="left:281px;top:4px" width="20" height="12" viewBox="0 0 20 12"><path d="M0.5 6.4L6.4 0.6H18.6V5.6L12.7 11.5M12.7 6.4L18.6 0.6" fill="none" stroke="#7f888d" stroke-width="1"/><rect x="0.7" y="6.7" width="12" height="4.8" fill="#fff" stroke="#22303a" stroke-width="1.4"/><path d="M3 11.4L7 7M7.4 11.4L11.4 7" fill="none" stroke="#22303a" stroke-width="1.3"/></svg>
</div>
<div class="row" style="top:378px">
<svg class="a" style="left:2px;top:4px" width="12" height="12" viewBox="0 0 12 12"><path d="M0.7 6.6L4.6 10.9L10.5 1.1" fill="none" stroke="#22303a" stroke-width="1.9"/></svg>
<div class="t" style="left:19px;width:30px;text-align:center;top:4px;">19</div>
<div class="sw" style="top:0"><svg width="30" height="17" shape-rendering="crispEdges"><rect width="30" height="17" fill="url(#p19)"/></svg></div>
<div class="t" style="left:90px;top:4px;letter-spacing:-0.219px;">Legno</div>
<svg class="a" style="left:234px;top:4px" width="16" height="12" viewBox="0 0 16 12"><path d="M0.6 5.1L5 0.6H13.6L8.7 5.9L14.6 11.3H0.6Z" fill="#fff" stroke="#22303a" stroke-width="1.15"/><path d="M0.9 8.4L8.8 0.8M2.2 11.2L9.6 4.4M6 11.2L10.4 7.2M9.8 11.2L12.4 8.9" fill="none" stroke="#22303a" stroke-width="1"/></svg>
<svg class="a" style="left:281px;top:4px" width="20" height="12" viewBox="0 0 20 12"><path d="M0.5 6.4L6.4 0.6H18.6V5.6L12.7 11.5M12.7 6.4L18.6 0.6" fill="none" stroke="#7f888d" stroke-width="1"/><rect x="0.7" y="6.7" width="12" height="4.8" fill="#fff" stroke="#22303a" stroke-width="1.4"/><path d="M3 11.4L7 7M7.4 11.4L11.4 7" fill="none" stroke="#22303a" stroke-width="1.3"/></svg>
</div>
<div class="sw" style="top:399px;border-top-width:2px;"></div>
</div>
<div class="a" style="left:341px;top:175px;width:15px;height:43px;background:#cdcdcd;"></div>
<svg class="a" style="left:344px;top:163px" width="10" height="8" viewBox="0 0 10 8"><path d="M1.2 5.6L4.5 2L7.8 5.6" fill="none" stroke="#555" stroke-width="2"/></svg>
<svg class="a" style="left:344px;top:548px" width="10" height="8" viewBox="0 0 10 8"><path d="M1.2 2L4.5 5.6L7.8 2" fill="none" stroke="#555" stroke-width="2"/></svg>
<div class="btn dis" style="left:378px;top:141px;width:118px;letter-spacing:-0.086px;">Duplica</div>
<div class="btn dis" style="left:378px;top:171px;width:118px;letter-spacing:-0.353px;">Cancella</div>
<div class="btn" style="left:378px;top:201px;width:118px;letter-spacing:-0.157px;">Elimina</div>
<div class="btn dis" style="left:378px;top:231px;width:118px;letter-spacing:-0.129px;">Reindicizzazione...</div>
<div class="btn dis" style="left:378px;top:281px;width:118px;letter-spacing:0.401px;">Aggiungi &gt;&gt;</div>
<div class="btn dis" style="left:378px;top:311px;width:118px;letter-spacing:-0.129px;">Per Indice &gt;&gt;</div>
<div class="btn dis" style="left:378px;top:341px;width:118px;letter-spacing:-0.258px;">Per Nome &gt;&gt;</div>
<div class="btn dis" style="left:378px;top:538px;width:118px;letter-spacing:-0.631px;">Salva come TXT...</div>
<div class="list" style="left:517px;top:140px;width:302px;height:18px;"></div>
<div class="list" style="left:517px;top:158px;width:304px;height:402px;"></div>
<div class="sep" style="left:556px;top:140px;height:18px;"></div>
<div class="sep" style="left:590px;top:140px;height:18px;"></div>
<div class="sep" style="left:746px;top:140px;height:18px;"></div>
<div class="sep" style="left:770px;top:140px;height:18px;"></div>
<div class="sep" style="left:794px;top:140px;height:18px;"></div>
<div class="sep" style="left:818px;top:140px;height:18px;"></div>
<div class="t" style="left:533px;top:143px;font-size:9px;line-height:12px;height:12px;-webkit-text-stroke:0.3px #000;transform:scaleX(1.3);transform-origin:0 0;">#</div>
<div class="t" style="left:593px;top:142px;letter-spacing:-0.425px;">Nome</div>
<svg class="a" style="left:751px;top:143px" width="16" height="12" viewBox="0 0 16 12"><path d="M0.6 5.1L5 0.6H13.6L8.7 5.9L14.6 11.3H0.6Z" fill="#fff" stroke="#22303a" stroke-width="1.15"/><path d="M0.9 8.4L8.8 0.8M2.2 11.2L9.6 4.4M6 11.2L10.4 7.2M9.8 11.2L12.4 8.9" fill="none" stroke="#22303a" stroke-width="1"/></svg>
<svg class="a" style="left:773px;top:143px" width="20" height="12" viewBox="0 0 20 12"><path d="M0.5 6.5V11.5H12.9V6.5M12.9 11.5L18.7 5.4V0.8" fill="#fff" stroke="#7f888d" stroke-width="1"/><path d="M0.6 6.5L6.4 0.6H18.6L12.9 6.5Z" fill="#fff" stroke="#22303a" stroke-width="1.2"/><path d="M4.7 6.3L10.3 0.8M8.8 6.3L14.4 0.8" fill="none" stroke="#22303a" stroke-width="1.35"/></svg>
<svg class="a" style="left:797px;top:143px" width="20" height="12" viewBox="0 0 20 12"><path d="M0.5 6.4L6.4 0.6H18.6V5.6L12.7 11.5M12.7 6.4L18.6 0.6" fill="none" stroke="#7f888d" stroke-width="1"/><rect x="0.7" y="6.7" width="12" height="4.8" fill="#fff" stroke="#22303a" stroke-width="1.4"/><path d="M3 11.4L7 7M7.4 11.4L11.4 7" fill="none" stroke="#22303a" stroke-width="1.3"/></svg>
<svg class="a" style="left:824px;top:163px" width="10" height="8" viewBox="0 0 10 8"><path d="M1.2 5.6L4.5 2L7.8 5.6" fill="none" stroke="#c2c2c2" stroke-width="2"/></svg>
<svg class="a" style="left:824px;top:548px" width="10" height="8" viewBox="0 0 10 8"><path d="M1.2 2L4.5 5.6L7.8 2" fill="none" stroke="#c2c2c2" stroke-width="2"/></svg>
<div class="btn" style="left:748px;top:111px;width:28px;height:22px;"></div>
<div class="btn dis" style="left:778px;top:111px;width:28px;height:22px;"></div>
<div class="btn dis" style="left:808px;top:111px;width:28px;height:22px;"></div>
<svg class="a" style="left:752px;top:112px" width="20" height="20" viewBox="0 0 20 20"><path d="M6.7 8V2.4Q6.7 1.2 7.9 1.2H14.6L18.2 4.8V17Q18.2 18.2 17 18.2H7.9Q6.7 18.2 6.7 17V13" fill="#fff" stroke="#22303a" stroke-width="1.3"/><path d="M14.4 1.4V5H18" fill="none" stroke="#22303a" stroke-width="1.1"/><path d="M1 10.5H13M10 7.4L13.1 10.5L10 13.6" fill="none" stroke="#2f7df6" stroke-width="1.3"/></svg>
<svg class="a" style="left:782px;top:112px" width="22" height="20" viewBox="0 0 22 20"><path d="M1.8 2.4Q1.8 1.2 3 1.2H9.6L13.2 4.8V17Q13.2 18.2 12 18.2H3Q1.8 18.2 1.8 17Z" fill="#e6e6e6" stroke="#9aa0a4" stroke-width="1.2"/><path d="M9.4 1.4V5H13" fill="none" stroke="#9aa0a4" stroke-width="1.1"/><path d="M6 10.5H19M16 7.4L19.1 10.5L16 13.6" fill="none" stroke="#8cb6f8" stroke-width="1.3"/></svg>
<svg class="a" style="left:815px;top:115px" width="14" height="14" viewBox="0 0 14 14"><path d="M1 0.8L13 12.6M13 0.8L1 12.6" fill="none" stroke="#9d9d9d" stroke-width="1.8"/></svg>
<div class="btn" style="left:669px;top:587px;width:88px;letter-spacing:0.142px;">Annulla</div>
<div class="btn" style="left:769px;top:587px;width:88px;border:2px solid #0078d7;line-height:19px;letter-spacing:-1.350px;">OK</div>
<svg class="a" style="left:861px;top:611px" width="8" height="8" viewBox="0 0 8 8"><rect x="6" y="0" width="2" height="2" fill="#bdbdbd"/><rect x="3" y="3" width="2" height="2" fill="#bdbdbd"/><rect x="6" y="3" width="2" height="2" fill="#bdbdbd"/><rect x="0" y="6" width="2" height="2" fill="#bdbdbd"/><rect x="3" y="6" width="2" height="2" fill="#bdbdbd"/><rect x="6" y="6" width="2" height="2" fill="#bdbdbd"/></svg>
</body></html>
